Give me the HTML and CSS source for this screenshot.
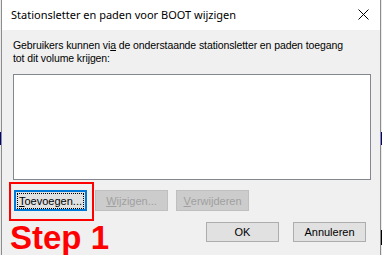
FILE: index.html
```html
<!DOCTYPE html>
<html>
<head lang="nl">
    <meta charset="UTF-8">
    <title>Stationsletter en paden wijzigen</title>
    <link rel="stylesheet" href="styles.css">
</head>
<body>
    <div class="backdrop-bar left"></div>
    <div class="backdrop-bar right"></div>
    <div class="backdrop-dark"></div>

    <div id="dialog">
        <div class="titlebar">
            <span class="title">Stationsletter en paden voor BOOT wijzigen</span>
            <svg class="close" width="11" height="11" viewBox="0 0 11 11">
                <path d="M0.5 0.5 L10.5 10.5 M10.5 0.5 L0.5 10.5" stroke="#000" stroke-width="1" fill="none"/>
            </svg>
        </div>
        <div class="content">
            <p class="intro">Gebruikers kunnen vi<u>a</u> de onderstaande stationsletter en paden toegang<br>tot dit volume krijgen:</p>
            <div class="listbox"></div>
            <div class="actions">
                <button class="btn focused"><span class="focus-ring"><u>T</u>oevoegen...</span></button>
                <button class="btn" disabled><u>W</u>ijzigen...</button>
                <button class="btn" disabled><u>V</u>erwijderen</button>
            </div>
            <div class="footer">
                <button class="btn">OK</button>
                <button class="btn">Annuleren</button>
            </div>
        </div>
    </div>

    <div class="mark-box"></div>
    <div class="mark-label">Step 1</div>
</body>
</html>
```

FILE: styles.css
```css
*{
    padding: 0;
    margin: 0;
    box-sizing: border-box;
}
body{
    width: 382px;
    height: 255px;
    background: #eaeaea;
    position: relative;
    overflow: hidden;
    font-family: "Liberation Sans", Arial, sans-serif;
}
.backdrop-bar{
    position: absolute;
    top: 132px;
    width: 2px;
    height: 13px;
    background: #000080;
}
.backdrop-bar.left{
    left: 0;
}
.backdrop-bar.right{
    right: 0;
}
.backdrop-dark{
    position: absolute;
    right: 0;
    top: 230px;
    width: 2px;
    height: 15px;
    background: #000;
}
#dialog{
    position: relative;
    margin-left: 1px;
    width: 380px;
    height: 255px;
    background: #f0f0f0;
    border-left: 1px solid #8c8c8c;
    border-right: 1px solid #8c8c8c;
}
.titlebar{
    height: 30px;
    background: #fff;
    display: flex;
    align-items: center;
    justify-content: space-between;
    padding: 0 11px 1px 9px;
}
.title{
    font-family: "Noto Sans", "Open Sans", sans-serif;
    font-size: 11px;
    color: #000;
}
.close{
    display: block;
}
.content{
    padding: 9px 9px 0 11px;
}
.intro{
    font-size: 10.5px;
    letter-spacing: -0.1px;
    line-height: 13px;
    color: #000;
    white-space: nowrap;
}
.listbox{
    margin-top: 9px;
    height: 106px;
    background: #fff;
    border: 1px solid #828790;
}
.actions{
    display: flex;
    gap: 8px;
    margin-top: 10px;
    padding-left: 1px;
}
.btn{
    width: 73px;
    height: 21px;
    font-family: "Liberation Sans", Arial, sans-serif;
    font-size: 11px;
    color: #000;
    background: #e1e1e1;
    border: 1px solid #adadad;
    display: flex;
    align-items: center;
    justify-content: center;
}
.btn:disabled{
    background: #cccccc;
    border-color: #bfbfbf;
    color: #a0a0a0;
}
.btn.focused{
    border: 2px solid #0078d7;
}
.focus-ring{
    display: block;
    padding: 1px 1px;
    outline: 1px dotted #000;
    line-height: 12px;
}
.footer{
    display: flex;
    justify-content: flex-end;
    gap: 14px;
    margin-top: 11px;
    padding-right: 5px;
}
.footer .btn{
    height: 20px;
}
.mark-box{
    position: absolute;
    left: 9px;
    top: 182px;
    width: 85px;
    height: 39px;
    border: 2px solid #ff0000;
}
.mark-label{
    position: absolute;
    left: 10px;
    top: 219px;
    font-family: "Liberation Sans", Arial, sans-serif;
    font-weight: bold;
    font-size: 33px;
    line-height: 38px;
    color: #ff0000;
}
```
